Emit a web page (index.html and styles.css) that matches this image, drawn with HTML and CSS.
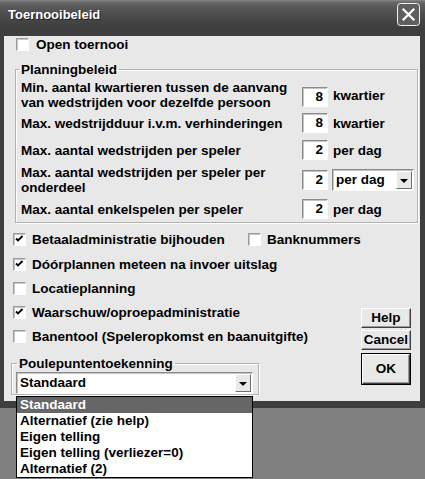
FILE: index.html
```html
<!DOCTYPE html>
<html>
<head>
<meta charset="utf-8">
<title>Toernooibeleid</title>
<link rel="stylesheet" href="styles.css">
</head>
<body>
<div class="window">
  <div class="titlebar">
    <span class="title">Toernooibeleid</span>
    <span class="close">
      <svg width="23" height="23" viewBox="0 0 23 23">
        <rect x="0.5" y="0.5" width="22" height="22" rx="3" ry="3" fill="#5f5f5f" stroke="#f2f2f2" stroke-width="1"/>
        <path d="M6.5 6.5 L16.5 16.5 M16.5 6.5 L6.5 16.5" stroke="#ffffff" stroke-width="2.2" stroke-linecap="square"/>
      </svg>
    </span>
  </div>
  <div class="frame">
    <div class="client">
      <div class="check open"><span class="box"></span><span>Open toernooi</span></div>

      <fieldset class="group plan">
        <legend>Planningbeleid</legend>
        <div class="plan-grid">
          <div class="lbl">Min. aantal kwartieren tussen de aanvang<br>van wedstrijden voor dezelfde persoon</div>
          <div class="num first">8</div>
          <div class="unit">kwartier</div>

          <div class="lbl">Max. wedstrijdduur i.v.m. verhinderingen</div>
          <div class="num">8</div>
          <div class="unit">kwartier</div>

          <div class="lbl">Max. aantal wedstrijden per speler</div>
          <div class="num">2</div>
          <div class="unit">per dag</div>

          <div class="lbl">Max. aantal wedstrijden per speler per<br>onderdeel</div>
          <div class="num">2</div>
          <div class="combo small"><span class="combo-text">per dag</span><span class="arrow-btn"><span class="tri"></span></span></div>

          <div class="lbl">Max. aantal enkelspelen per speler</div>
          <div class="num">2</div>
          <div class="unit">per dag</div>
        </div>
      </fieldset>

      <div class="lower">
        <div class="left">
          <div class="checkrow">
            <div class="check wide"><span class="box on"><svg width="11" height="11" viewBox="0 0 11 11"><path d="M2 4.5 L4 6.5 L8.5 2" fill="none" stroke="#000" stroke-width="1.8"/></svg></span><span>Betaaladministratie bijhouden</span></div>
            <div class="check"><span class="box"></span><span>Banknummers</span></div>
          </div>
          <div class="checkrow">
            <div class="check"><span class="box on"><svg width="11" height="11" viewBox="0 0 11 11"><path d="M2 4.5 L4 6.5 L8.5 2" fill="none" stroke="#000" stroke-width="1.8"/></svg></span><span>Dóórplannen meteen na invoer uitslag</span></div>
          </div>
          <div class="checkrow">
            <div class="check"><span class="box"></span><span>Locatieplanning</span></div>
          </div>
          <div class="checkrow">
            <div class="check"><span class="box on"><svg width="11" height="11" viewBox="0 0 11 11"><path d="M2 4.5 L4 6.5 L8.5 2" fill="none" stroke="#000" stroke-width="1.8"/></svg></span><span>Waarschuw/oproepadministratie</span></div>
          </div>
          <div class="checkrow">
            <div class="check"><span class="box"></span><span>Banentool (Speleropkomst en baanuitgifte)</span></div>
          </div>
          <fieldset class="group poule">
            <legend>Poulepuntentoekenning</legend>
            <div class="combo wide-combo"><span class="combo-text">Standaard</span><span class="arrow-btn"><span class="tri"></span></span></div>
          </fieldset>
        </div>
        <div class="buttons">
          <div class="btn help">Help</div>
          <div class="btn cancel">Cancel</div>
          <div class="btn ok"><span class="ok-inner">OK</span></div>
        </div>
      </div>
    </div>
  </div>
</div>

<div class="droplist">
  <div class="item sel">Standaard</div>
  <div class="item">Alternatief (zie help)</div>
  <div class="item">Eigen telling</div>
  <div class="item">Eigen telling (verliezer=0)</div>
  <div class="item">Alternatief (2)</div>
</div>
</body>
</html>
```

FILE: styles.css
```css
* { box-sizing: border-box; }

body {
  margin: 0;
  width: 425px;
  height: 479px;
  overflow: hidden;
  position: relative;
  background: #808080;
  font-family: "Liberation Sans", Arial, sans-serif;
  font-weight: bold;
  font-size: 13.5px;
  color: #000;
}

.window {
  width: 425px;
  height: 400px;
  background: #3e3e3e;
  display: flex;
  flex-direction: column;
}

.titlebar {
  height: 28px;
  flex: none;
  display: flex;
  align-items: center;
  justify-content: space-between;
  padding: 0 4px 0 8px;
  background: linear-gradient(#8a8a8a 0px, #6a6a6a 2px, #5a5a5a 6px, #4e4e4e 14px, #444444 22px, #3e3e3e 28px);
}

.title {
  color: #fff;
  font-size: 13px;
  text-shadow: 1px 1px 0 #202020;
  padding-top: 1px;
}

.close {
  display: flex;
  margin-right: 1px;
  margin-top: 1px;
}

.frame {
  flex: 1;
  padding: 0 5px 7px 4px;
  background: #3e3e3e;
}

.client {
  height: 365px;
  background: #e8e8e8;
  overflow: visible;
}

/* checkboxes */
.check {
  display: flex;
  align-items: center;
  gap: 6px;
  white-space: nowrap;
}

.box {
  width: 13px;
  height: 13px;
  flex: none;
  background: #fff;
  border: 1px solid;
  border-color: #9a9a9a #ffffff #ffffff #9a9a9a;
  box-shadow: inset 1px 1px 0 #c8c8c8;
  display: flex;
  align-items: center;
  justify-content: center;
}

.open {
  height: 16px;
  margin: 8px 0 0 12px;
  gap: 7px;
}

/* group boxes */
.group {
  margin: 0;
  padding: 0;
  border: 1px solid #b2b2b2;
  box-shadow: inset 1px 1px 0 #ffffff, 1px 1px 0 #ffffff;
  min-width: 0;
}

.group legend {
  padding: 0 2px;
  line-height: 15px;
  font-size: 13.5px;
}

.plan {
  margin: 10px 2px 0 11px;
  padding: 3px 0 0 5px;
}

.plan legend {
  margin-left: -2px;
}

.plan-grid {
  display: grid;
  grid-template-columns: 281px 26px auto;
  grid-template-rows: 30px 26px 28px 32px 26px;
  align-items: center;
}

.lbl {
  line-height: 15px;
  white-space: nowrap;
}

.num {
  width: 26px;
  height: 20px;
  background: #fff;
  border: 1px solid;
  border-color: #8a8a8a #ffffff #ffffff #8a8a8a;
  box-shadow: inset 1px 1px 0 #c4c4c4;
  text-align: right;
  padding-right: 4px;
  line-height: 18px;
}

.num.first {
  margin-top: 3px;
}

.unit {
  margin-left: 5px;
}

/* combo boxes */
.combo {
  height: 22px;
  background: #fff;
  border: 1px solid;
  border-color: #8a8a8a #ffffff #ffffff #8a8a8a;
  box-shadow: inset 1px 1px 0 #c4c4c4;
  display: flex;
  align-items: center;
  justify-content: space-between;
  padding: 1px 1px 1px 3px;
}

.combo.small {
  width: 82px;
  margin-left: 4px;
}

.combo-text {
  line-height: 18px;
}

.arrow-btn {
  width: 16px;
  height: 18px;
  background: #e8e8e8;
  border: 1px solid;
  border-color: #ffffff #6e6e6e #6e6e6e #ffffff;
  display: flex;
  align-items: center;
  justify-content: center;
}

.tri {
  width: 0;
  height: 0;
  border-left: 4px solid transparent;
  border-right: 4px solid transparent;
  border-top: 4px solid #000;
  margin-top: 1px;
}

/* lower section */
.lower {
  display: flex;
  margin-top: 4px;
}

.left {
  flex: 1;
}

.checkrow {
  height: 24px;
  display: flex;
  align-items: center;
  padding-left: 9px;
}

.checkrow:first-child {
  height: 25px;
}

.check.wide {
  width: 235px;
}

.poule {
  margin: 8px 0 0 7px;
  width: 248px;
  padding: 1px 4px 0 4px;
}

.poule legend {
  margin-left: 1px;
}

.wide-combo {
  width: 237px;
}

.buttons {
  width: 64px;
  margin-right: 9px;
  padding-top: 81px;
  display: flex;
  flex-direction: column;
}

.btn {
  height: 20px;
  background: #e8e8e8;
  border: 1px solid;
  border-color: #ffffff #404040 #404040 #ffffff;
  box-shadow: inset -1px -1px 0 #9a9a9a;
  display: flex;
  align-items: center;
  justify-content: center;
  line-height: 16px;
}

.cancel {
  margin-top: 2px;
}

.ok {
  margin-top: 3px;
  height: 32px;
  border: 1px solid #000;
  box-shadow: none;
  padding: 0;
}

.ok-inner {
  width: 100%;
  height: 100%;
  display: flex;
  align-items: center;
  justify-content: center;
  border: 1px solid;
  border-color: #ffffff #404040 #404040 #ffffff;
  box-shadow: inset -1px -1px 0 #9a9a9a;
}

/* dropdown list popup */
.droplist {
  position: absolute;
  left: 16px;
  top: 396px;
  width: 237px;
  height: 82px;
  background: #fff;
  border: 1px solid #000;
}

.item {
  height: 16px;
  line-height: 16px;
  padding-left: 3px;
  white-space: nowrap;
}

.item.sel {
  background: #666666;
  color: #fff;
}
```
